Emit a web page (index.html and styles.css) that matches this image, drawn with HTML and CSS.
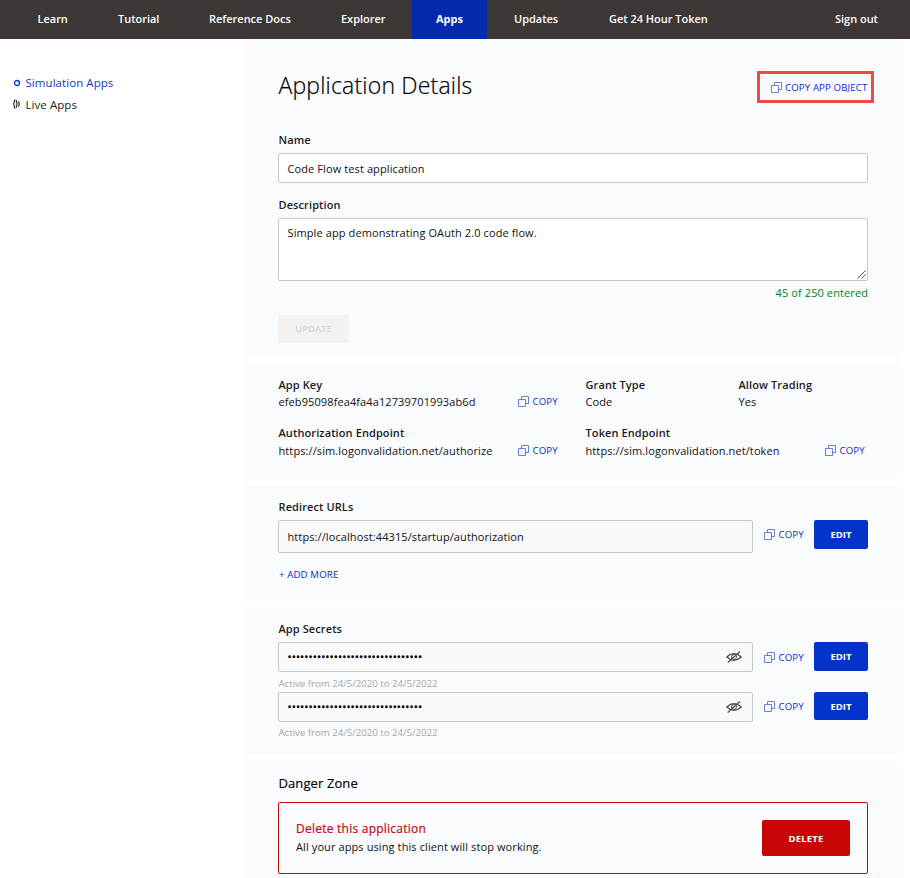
FILE: index.html
```html
<!DOCTYPE html>
<html lang="en">
<head>
<meta charset="utf-8">
<title>Application Details</title>
<link rel="stylesheet" href="styles.css">
</head>
<body>
<svg class="defs" width="0" height="0">
  <symbol id="copy" viewBox="0 0 11 11"><path d="M3.500 3.500V.5h7v7h-3M.5 3.500h7v7h-7z" fill="none" stroke="currentColor"/></symbol>
  <symbol id="eye" viewBox="0 0 16 12"><path d="M.8 6Q8-.6 15.200 6 8 12.600 .8 6z" fill="none" stroke="currentColor" stroke-width="1.200"/><circle cx="8" cy="6" r="2.500" fill="none" stroke="currentColor" stroke-width="1"/><path d="M1.800 11.500 14 .5" stroke="currentColor" stroke-width="1.200"/></symbol>
</svg>
<nav class="nav">
  <a class="n1">Learn</a><a class="n2">Tutorial</a><a class="n3">Reference Docs</a><a class="n4">Explorer</a><a class="n5">Apps</a><a class="n6">Updates</a><a class="n7">Get 24 Hour Token</a><a class="n8">Sign out</a>
</nav>
<div class="page">
  <aside class="side">
    <a class="sel"><svg width="8" height="8"><circle cx="4" cy="4" r="2.500" fill="none" stroke="currentColor" stroke-width="1.300"/></svg><span>Simulation Apps</span></a>
    <a class="live"><svg width="8" height="10"><path d="M1.900.5Q-.1 5 1.900 9.500M3 1Q5 5 3 9M5.500 2.200Q6.900 5 5.500 7.800" fill="none" stroke="currentColor" stroke-width="1.100"/></svg><span>Live Apps</span></a>
  </aside>
  <main class="main">
    <section class="card details">
      <div class="head"><h1>Application Details</h1><a class="copy boxed"><svg width="11" height="11"><use href="#copy"/></svg><span>COPY APP OBJECT</span></a></div>
      <label>Name</label>
      <div class="field name">Code Flow test application</div>
      <label>Description</label>
      <div class="field area"><span>Simple app demonstrating OAuth 2.0 code flow.</span><svg width="9" height="9"><path d="M.5 8.500 8.500.5M4.500 8.500l4-4" stroke="#555" fill="none"/></svg></div>
      <div class="count"><span>45 of 250 entered</span></div>
      <button class="update">UPDATE</button>
    </section>
    <section class="card keys">
      <div><label>App Key</label><p>efeb95098fea4fa4a12739701993ab6d</p></div>
      <a class="copy"><svg width="11" height="11"><use href="#copy"/></svg><span>COPY</span></a>
      <div><label>Grant Type</label><p>Code</p></div>
      <div><label>Allow Trading</label><p>Yes</p></div>
      <div class="second"><label>Authorization Endpoint</label><p>https://sim.logonvalidation.net/authorize</p></div>
      <a class="copy"><svg width="11" height="11"><use href="#copy"/></svg><span>COPY</span></a>
      <div class="second wide"><div><label>Token Endpoint</label><p>https://sim.logonvalidation.net/token</p></div><a class="copy"><svg width="11" height="11"><use href="#copy"/></svg><span>COPY</span></a></div>
    </section>
    <section class="card urls">
      <label>Redirect URLs</label>
      <div class="row"><div class="field locked tall">https://localhost:44315/startup/authorization</div><a class="copy"><svg width="11" height="11"><use href="#copy"/></svg><span>COPY</span></a><button class="edit">EDIT</button></div>
      <a class="more">+ ADD MORE</a>
    </section>
    <section class="card secrets">
      <label>App Secrets</label>
      <div class="row"><div class="field locked"><span class="dots">••••••••••••••••••••••••••••••••</span><svg class="eye" width="16" height="12"><use href="#eye"/></svg></div><a class="copy low"><svg width="11" height="11"><use href="#copy"/></svg><span>COPY</span></a><button class="edit">EDIT</button></div>
      <small class="first">Active from 24/5/2020 to 24/5/2022</small>
      <div class="row"><div class="field locked"><span class="dots">••••••••••••••••••••••••••••••••</span><svg class="eye" width="16" height="12"><use href="#eye"/></svg></div><a class="copy"><svg width="11" height="11"><use href="#copy"/></svg><span>COPY</span></a><button class="edit short">EDIT</button></div>
      <small>Active from 24/5/2020 to 24/5/2022</small>
    </section>
    <section class="card danger">
      <h2>Danger Zone</h2>
      <div class="zone"><div><h3>Delete this application</h3><p>All your apps using this client will stop working.</p></div><button class="delete">DELETE</button></div>
    </section>
  </main>
</div>
</body>
</html>
```
FILE: styles.css
```css
* { box-sizing: border-box; }
body { margin: 0; height: 878px; overflow: hidden; background: #fff; color: #111; font: 11px/16px "Open Sans", sans-serif; letter-spacing: .1px; }
h1, h2, h3, p { margin: 0; font-weight: 400; }
h1, h2, label, p, small { text-indent: .5px; }
svg { flex: none; display: block; }
.defs { position: absolute; }
button { border: 0; border-radius: 2px; padding: 0; font: 700 9.500px/16px "Open Sans", sans-serif; white-space: nowrap; }
.nav { display: flex; height: 39px; background: #3c3635; color: #fff; font-weight: 600; line-height: 37px; letter-spacing: -.02px; white-space: nowrap; }
.nav a { flex: none; }
.n1 { width: 118px; padding-left: 37.500px; }
.n2 { width: 91px; }
.n3 { width: 132px; }
.n4 { width: 71px; }
.nav .n5 { width: 75px; text-align: center; font-weight: 700; background: #042bae; }
.n6 { padding-left: 27px; width: 122px; }
.n7 { width: 226px; }
.page { display: flex; }
.side { width: 245px; padding: 36px 0 0 13px; font-size: 11.500px; letter-spacing: .06px; color: #1c1c1c; }
.side a { display: flex; align-items: center; gap: 4.500px; height: 16px; margin-bottom: 6px; }
.side .sel { color: #1235c4; }
.live svg { margin-bottom: 2px; }
.main { width: 657px; }
.card { background: #fafbfd; margin-bottom: 6px; padding: 0 34px 0 33px; white-space: nowrap; }
label { display: block; height: 16px; font-weight: 600; color: #1c1c1c; }
.details { height: 318px; padding-top: 32px; }
.head { display: flex; justify-content: space-between; height: 32px; margin: 0 -6px 29px 0; }
h1 { font-size: 23px; line-height: 28px; font-weight: 300; letter-spacing: .18px; color: #000; -webkit-text-stroke: .2px #000; }
.copy { display: flex; align-items: center; gap: 3.500px; height: 16px; color: #0a2cc2; font-size: 9.700px; letter-spacing: .1px; }
.copy svg { opacity: .6; }
.copy span { padding-top: 1px; }
.boxed { width: 117px; height: 32px; border: 3px solid #e84c45; padding-left: 11px; gap: 3px; }
.field { border: 1px solid #c8c8c8; border-radius: 2px; background: #fff; padding: 0 8px 0 8.500px; display: flex; align-items: center; height: 30px; }
.name { margin: 5px 0 14px; padding-top: 2px; }
.area { height: 63px; margin: 5px 0 4px; padding: 6px 1px 1px 8.500px; justify-content: space-between; align-items: flex-start; }
.area svg { align-self: flex-end; }
.count { color: #078016; text-align: right; height: 16px; margin-bottom: 14px; }
.update { width: 71px; height: 28px; background: #f3f2f1; color: #d6d6d6; font-weight: 600; }
.keys { height: 116px; padding-top: 14px; display: grid; grid-template-columns: 240px 67px 153px 130px; grid-template-rows: 48px 40px; }
.keys label { height: 17px; }
.keys .copy { margin-top: 16px; }
.second p { margin-top: 1px; }
.keys .second + .copy { margin-top: 17px; }
.wide { grid-column: span 2; display: flex; }
.wide div { width: 240px; }
.wide .copy { margin-top: 17px; }
.urls { height: 117px; padding-top: 14px; }
.row { display: flex; }
.locked { width: 475px; background: #f9f9f9; justify-content: space-between; }
.tall { height: 33px; }
.row .copy { margin: 6px 0 0 11px; width: 50px; }
.row .low { margin-top: 7px; }
.urls .row { margin: 5px 0 14px; }
.edit { width: 54px; height: 29px; background: #0234cb; color: #fff; }
.short { height: 28px; padding-top: 1px; }
.more { display: block; color: #0a2cc2; font-size: 9.700px; padding-left: 1px; }
.secrets { height: 147px; padding-top: 13px; }
.secrets label { margin-bottom: 5px; }
.dots { color: #000; letter-spacing: .07px; -webkit-text-stroke: .3px #000; }
.eye { color: #4c4c4c; margin-right: 2px; }
small { display: block; font-size: 9.700px; line-height: 16px; letter-spacing: -.03px; color: #a6a6a6; height: 20px; padding-top: 3px; }
.first { padding-top: 4px; }
.danger { height: 117px; padding-top: 13px; }
h2 { font-size: 13px; line-height: 18px; height: 28px; color: #000; -webkit-text-stroke: .15px #000; }
.zone { height: 72px; border: 1px solid #c90808; border-radius: 2px; padding: 0 17px; display: flex; align-items: center; justify-content: space-between; }
.zone p { text-indent: 0; }
h3 { font-size: 12px; line-height: 18px; margin-top: -1px; padding-bottom: 1px; letter-spacing: .24px; color: #c80a16; -webkit-text-stroke: .2px #c80a16; }
.delete { width: 88px; height: 36px; background: #c90506; color: #fff; letter-spacing: .2px; padding-top: 1px; }
```
